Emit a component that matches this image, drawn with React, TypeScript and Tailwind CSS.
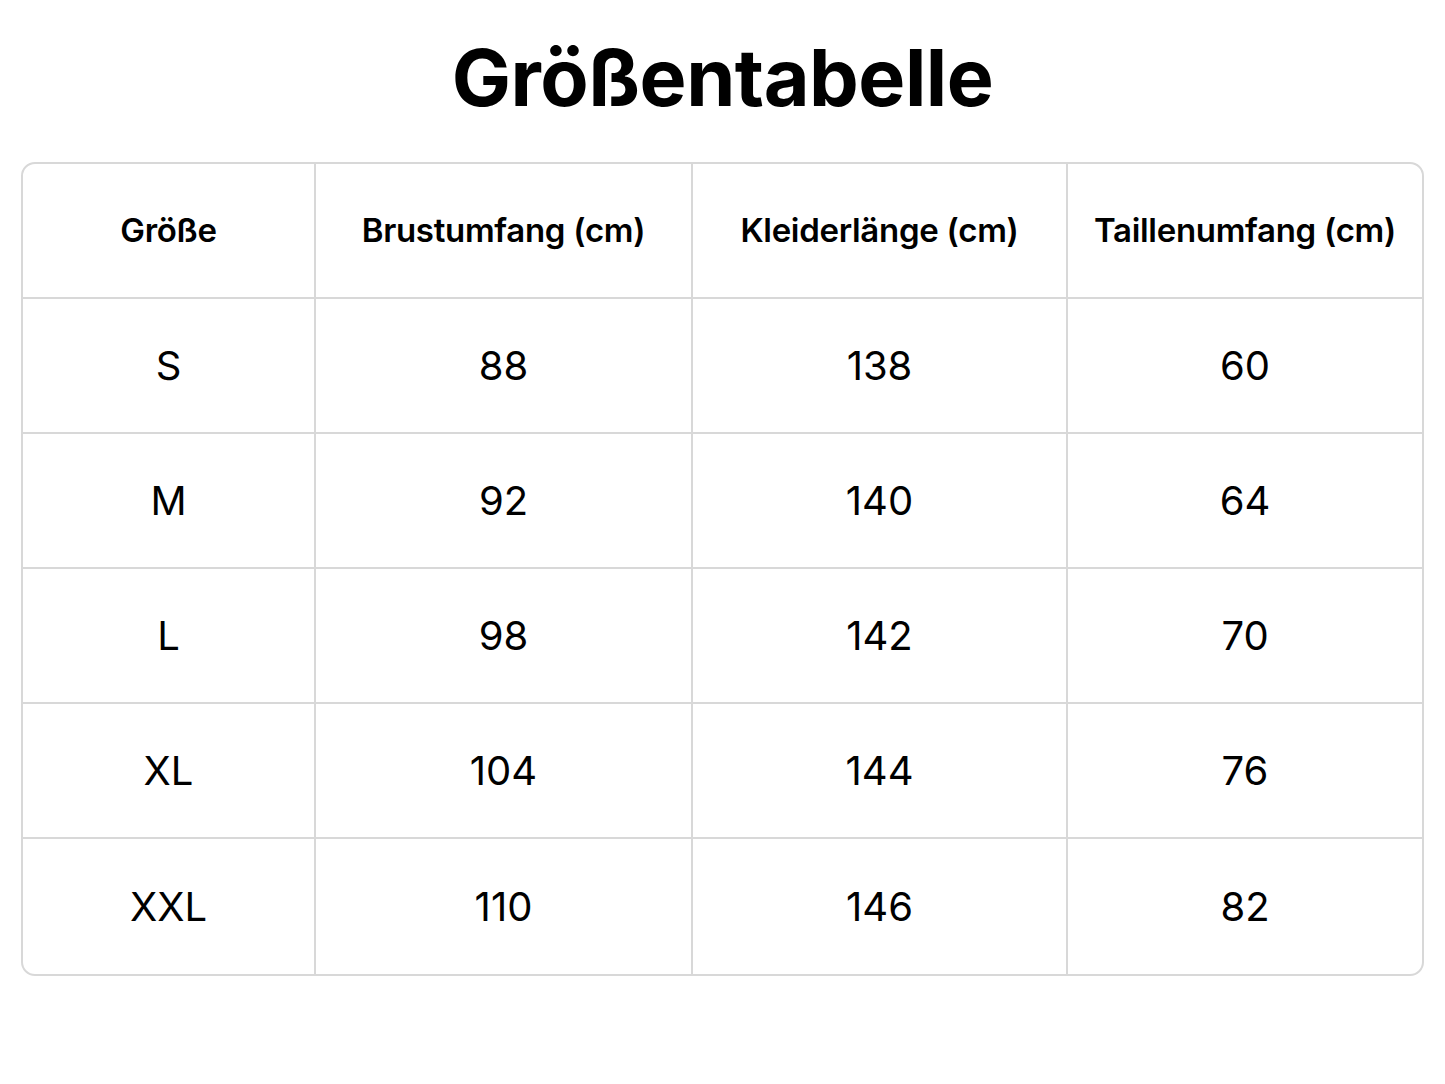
const headers = ['Größe', 'Brustumfang (cm)', 'Kleiderlänge (cm)', 'Taillenumfang (cm)'];

const rows = [
  ['S', '88', '138', '60'],
  ['M', '92', '140', '64'],
  ['L', '98', '142', '70'],
  ['XL', '104', '144', '76'],
  ['XXL', '110', '146', '82'],
];

const font = { fontFamily: 'Inter, "Noto Sans", sans-serif' };

export default function App() {
  return (
    <div className="min-h-[1084px] w-full bg-white text-black" style={font}>
      <div className="pt-[38px] h-[162px] flex justify-center">
        <h1 className="text-[79px] leading-none font-bold tracking-[-0.5px]">Größentabelle</h1>
      </div>

      <div className="ml-[21px] w-[1403px] rounded-[14px] border-2 border-[#d8d8d8] overflow-hidden">
        <div className="grid grid-cols-[293px_377px_375px_354px]">
          {headers.map((h, i) => (
            <div
              key={h}
              className={`h-[135px] flex items-center justify-center border-b-2 border-[#d8d8d8] text-[33px] font-semibold tracking-[-0.3px] ${i < 3 ? 'border-r-2' : ''}`}
            >
              {h}
            </div>
          ))}
          {rows.map((r, ri) =>
            r.map((c, ci) => (
              <div
                key={`${ri}-${ci}`}
                className={`h-[135px] flex items-center justify-center border-[#d8d8d8] text-[40px] font-normal ${ci < 3 ? 'border-r-2' : ''} ${ri < rows.length - 1 ? 'border-b-2' : ''}`}
              >
                {c}
              </div>
            ))
          )}
        </div>
      </div>
    </div>
  );
}
